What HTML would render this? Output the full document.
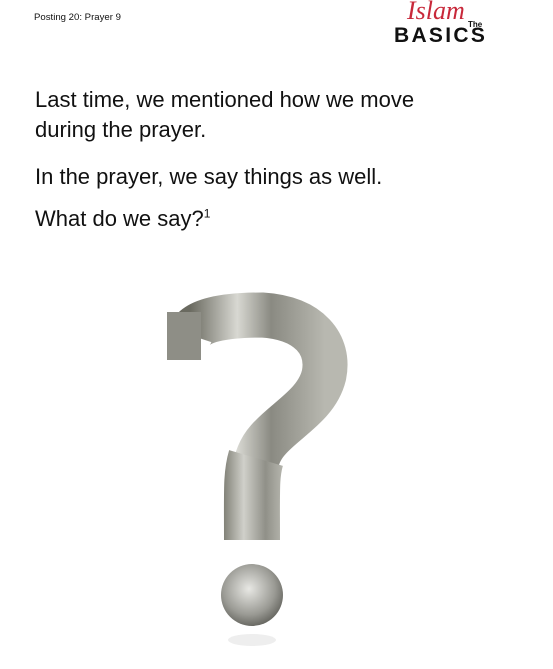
<!DOCTYPE html>
<html><head><style>
body{margin:0;width:553px;height:669px;background:#fff;position:relative;overflow:hidden;font-family:"Liberation Sans",sans-serif;color:#111}
.t{position:absolute;left:35px;font-size:22px;white-space:nowrap}
</style></head><body>
<div style="position:absolute;left:34px;top:12px;font-size:9.6px">Posting 20: Prayer 9</div>
<div style="position:absolute;left:407px;top:-4px;font-family:'Liberation Serif',serif;font-style:italic;font-size:26px;color:#c8283a">Islam</div>
<div style="position:absolute;left:468px;top:20px;font-size:8px;font-weight:bold">The</div>
<div style="position:absolute;left:394px;top:26px;font-size:21px;font-weight:bold;letter-spacing:2.3px;line-height:20px">BASICS</div>
<div class="t" style="top:87px">Last time, we mentioned how we move</div>
<div class="t" style="top:117px">during the prayer.</div>
<div class="t" style="top:164px">In the prayer, we say things as well.</div>
<div class="t" style="top:206px">What do we say?<sup style="font-size:12px">1</sup></div>
<svg width="553" height="669" style="position:absolute;left:0;top:0">
<defs>
<linearGradient id="g" x1="0" y1="0" x2="1" y2="0"><stop offset="0" stop-color="#6a6a60"/><stop offset=".35" stop-color="#d8d8d2"/><stop offset=".6" stop-color="#8a8a82"/><stop offset="1" stop-color="#b8b8b0"/></linearGradient>
<linearGradient id="s" gradientUnits="userSpaceOnUse" x1="222" y1="0" x2="284" y2="0"><stop offset="0" stop-color="#7a7a70"/><stop offset=".35" stop-color="#d0d0ca"/><stop offset=".7" stop-color="#909088"/><stop offset="1" stop-color="#b8b8b0"/></linearGradient>
<radialGradient id="b" cx=".45" cy=".4" r=".6"><stop offset="0" stop-color="#e8e8e4"/><stop offset=".7" stop-color="#9a9a94"/><stop offset="1" stop-color="#6a6a64"/></radialGradient>
</defs>
<path d="M190 335 C195 320 225 315 262 315 C310 318 330 345 324 375 C317 405 285 420 268 440 C252 458 252 480 252 540" fill="none" stroke="url(#g)" stroke-width="45" stroke-linejoin="round"/>
<path d="M256 458 C251 475 252 490 252 540" fill="none" stroke="url(#s)" stroke-width="56"/>
<rect x="167" y="312" width="34" height="48" fill="#8e8e86"/>
<circle cx="252" cy="595" r="31" fill="url(#b)"/>
<ellipse cx="252" cy="640" rx="24" ry="6" fill="#eee"/>
</svg>
</body></html>
